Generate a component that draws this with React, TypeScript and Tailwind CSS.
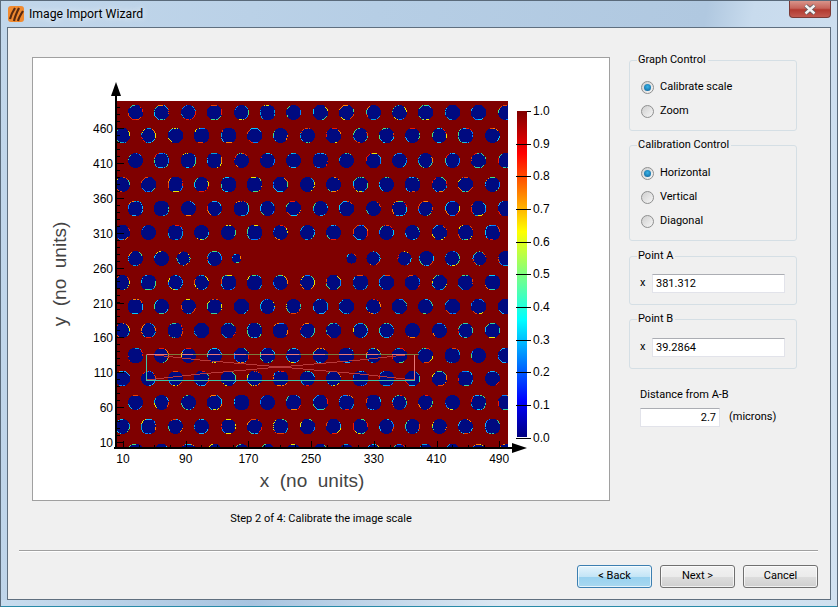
import type { ReactNode } from 'react'

const RIM_COLORS = ['#00c8ff', '#e8e800', '#40e080', '#f01800', '#ff8000', '#0080ff', '#10b0ff', '#e84000', '#00a0e0', '#30d0a0']

const ROW_YS = [112, 135, 160, 184, 208, 232, 258, 282, 306, 330, 355, 378, 402, 426, 451]
const PITCH = 26.4

// the row through the missing patch in the middle of the sample
const GAP_ROW: [number, number][] = [
  [135, 7.5], [161, 7.5], [183, 7], [214, 7.5], [236, 4.5], [351, 5], [373, 7],
  [404, 7], [426, 7.5], [452, 7.5], [479, 7], [505, 7.5],
]

function buildHoles() {
  let seed = 90210
  const rand = () => {
    seed = (seed * 16807) % 2147483647
    return seed / 2147483647
  }
  let fill = ''
  const rims: Record<string, string> = {}
  const addHole = (x: number, y: number, r: number) => {
    const cx = Math.round(x)
    const cy = Math.round(y)
    const phase = rand() * 6.28
    const colors = Array.from({ length: 8 }, () =>
      rand() < 0.45 ? '' : RIM_COLORS[Math.floor(rand() * RIM_COLORS.length)],
    )
    const rim = (px: number, py: number) => {
      if (rand() < 0.15) return
      const a = Math.atan2(py - cy, px - cx) + 3.15 + phase
      const c = colors[Math.floor(a / 0.8) % 8]
      if (c) rims[c] = (rims[c] || '') + `M${px} ${py}h1v1h-1z`
    }
    const top = Math.floor(r)
    for (let dy = -top; dy <= top; dy++) {
      const half = Math.floor(Math.sqrt(r * r - dy * dy))
      fill += `M${cx - half} ${cy + dy}h${half * 2 + 1}v1h-${half * 2 + 1}z`
      if (Math.abs(dy) === top) {
        for (let px = cx - half; px <= cx + half; px++) rim(px, cy + dy)
      } else {
        rim(cx - half, cy + dy)
        rim(cx + half, cy + dy)
      }
    }
  }
  ROW_YS.forEach((y, row) => {
    if (row === 6) {
      GAP_ROW.forEach(([x, r]) => addHole(x, y, r))
      return
    }
    const start = row % 2 === 0 ? 135 : 122
    for (let k = 0; k < 15; k++) addHole(start + k * PITCH, y, 7.3 + rand() * 0.7)
  })
  return { fill, rims }
}

const HOLES = buildHoles()

const Y_LABELS = [460, 410, 360, 310, 260, 210, 160, 110, 60, 10]
const X_LABELS = [10, 90, 170, 250, 330, 410, 490]
const BAR_LABELS = ['1.0', '0.9', '0.8', '0.7', '0.6', '0.5', '0.4', '0.3', '0.2', '0.1', '0.0']

function Plot() {
  const yMinor = Array.from({ length: 50 }, (_, i) => 128 - 28 + i * 6.98).filter((y) => y > 101 && y < 447)
  const xMinor = Array.from({ length: 26 }, (_, i) => 123 + i * 15.68)
  return (
    <svg width={576} height={442} viewBox="33 58 576 442" className="block" fontFamily='"Liberation Sans", sans-serif'>
      <defs>
        <clipPath id="plot-area">
          <rect x={116} y={101} width={392} height={346} />
        </clipPath>
        <linearGradient id="jet" x1="0" y1="1" x2="0" y2="0">
          <stop offset="0" stopColor="#000080" />
          <stop offset="0.11" stopColor="#0000ff" />
          <stop offset="0.36" stopColor="#00ffff" />
          <stop offset="0.5" stopColor="#80ff80" />
          <stop offset="0.63" stopColor="#ffff00" />
          <stop offset="0.87" stopColor="#ff0000" />
          <stop offset="1" stopColor="#7f0000" />
        </linearGradient>
      </defs>

      <rect x={116} y={101} width={392} height={347} fill="#7f0000" />
      <g clipPath="url(#plot-area)" shapeRendering="crispEdges">
        <path d={HOLES.fill} fill="#000a80" />
        {Object.entries(HOLES.rims).map(([color, d]) => (
          <path key={color} d={d} fill={color} />
        ))}
      </g>

      {/* calibration selection */}
      <g shapeRendering="crispEdges" fill="none">
        <path d="M146 354L200 360L280 367L360 360L414 354M146 380L200 374L280 367L360 374L414 380" stroke="#b83a3a" strokeWidth={1} />
        <path d="M146.5 354.5H414.5V380" stroke="#e87878" />
        <path d="M146.5 354.5V380.5H414.5" stroke="#3cc8a8" />
        {Array.from({ length: 10 }, (_, k) => (
          <path key={k} d={`M${167 + k * PITCH} 354.5h14`} stroke="#7c7c3c" />
        ))}
      </g>

      {/* axes */}
      <g stroke="#000" shapeRendering="crispEdges">
        <path d="M116 94V449M114 448H516" strokeWidth={2} />
        {yMinor.map((y) => (
          <path key={y} d={`M116 ${Math.round(y)}h4`} />
        ))}
        {Y_LABELS.map((v, i) => (
          <path key={v} d={`M116 ${Math.round(128 + i * 34.9)}h8`} />
        ))}
        {xMinor.filter((x) => x < 508).map((x) => (
          <path key={x} d={`M${Math.round(x)} 448v-3`} />
        ))}
        {X_LABELS.map((v, i) => (
          <path key={v} d={`M${Math.round(123 + i * 62.7)} 448v-7`} />
        ))}
      </g>
      <path d="M116 82L121 96H111Z" fill="#000" />
      <path d="M527 448L512 443V453Z" fill="#000" />

      {Y_LABELS.map((v, i) => (
        <text key={v} x={113} y={133 + i * 34.9} fontSize={12} textAnchor="end">
          {v}
        </text>
      ))}
      {X_LABELS.map((v, i) => (
        <text key={v} x={123 + i * 62.7} y={463} fontSize={12} textAnchor="middle">
          {v}
        </text>
      ))}
      <text x={312} y={487} fontSize={19} fill="#444" textAnchor="middle" style={{ whiteSpace: 'pre' }}>
        {'x  (no  units)'}
      </text>
      <text
        x={66}
        y={274}
        fontSize={19}
        fill="#444"
        textAnchor="middle"
        transform="rotate(-90 66 274)"
        style={{ whiteSpace: 'pre' }}
      >
        {'y  (no  units)'}
      </text>

      {/* colour bar */}
      <rect x={517} y={111} width={10} height={326} fill="url(#jet)" />
      {BAR_LABELS.map((label, i) => {
        const y = Math.round(111 + i * 32.65)
        return (
          <g key={label}>
            <path d={`M${i === 0 ? 527 : 516} ${y}.5H531`} stroke="#000" shapeRendering="crispEdges" />
            <text x={533} y={y + 4} fontSize={12}>
              {label}
            </text>
          </g>
        )
      })}
    </svg>
  )
}

function Radio({ label, checked }: { label: string; checked?: boolean }) {
  return (
    <div className="flex h-6 items-center gap-[6px]">
      <span className="flex h-[13px] w-[13px] items-center justify-center rounded-full border border-[#8e8f8f] bg-[linear-gradient(135deg,#cfcfcf,#f6f6f6)]">
        {checked && (
          <span className="h-[7px] w-[7px] rounded-full bg-[radial-gradient(circle_at_50%_40%,#39b4e8,#0a5a92)]" />
        )}
      </span>
      <span>{label}</span>
    </div>
  )
}

function Group({ title, className, children }: { title: string; className: string; children: ReactNode }) {
  return (
    <fieldset className={`rounded-[3px] border border-[#d5dfe5] ${className}`}>
      <legend className="ml-[7px] pl-[1px] pr-[2px] leading-4">{title}</legend>
      {children}
    </fieldset>
  )
}

function TextBox({ value, className }: { value: string; className: string }) {
  return (
    <input
      readOnly
      value={value}
      className={`h-[19px] border border-[#e2e3ea] border-t-[#abadb3] bg-white px-[3px] text-[11px] text-black outline-none ${className}`}
    />
  )
}

function PointRow({ value }: { value: string }) {
  return (
    <div className="flex items-center pl-[10px]">
      <span className="w-[12px]">x</span>
      <TextBox value={value} className="w-[133px]" />
    </div>
  )
}

function WizardButton({ label, primary }: { label: string; primary?: boolean }) {
  return (
    <button
      className={[
        'h-[23px] w-[75px] rounded-[3px] border text-center text-[11px] shadow-[inset_0_0_0_1px_#ffffffb0]',
        primary
          ? 'border-[#3c7fb1] bg-[linear-gradient(#e5f4fc,#c4e5f6_50%,#98d1ef_52%,#a8d8f0)]'
          : 'border-[#707070] bg-[linear-gradient(#f2f2f2,#ebebeb_50%,#dddddd_52%,#cfcfcf)]',
      ].join(' ')}
    >
      {label}
    </button>
  )
}

export default function App() {
  return (
    <div className='flex h-[607px] w-[838px] flex-col overflow-hidden border-x border-t border-[#5a6a7a] bg-[linear-gradient(100deg,#c2d7eb,#b6cee5_40%,#b0c8e0_75%,#c8dbed_80%,#d2e2f1)] font-["Roboto",sans-serif] text-[11px] text-black'>
      <div className="flex h-[26px] shrink-0 items-start justify-between pl-[7px] pr-[6px]">
        <div className="flex items-center gap-[5px] pt-[5px]">
          <svg width={16} height={16} viewBox="0 0 16 16">
            <rect width={16} height={16} rx={3} fill="#f08a30" />
            <path d="M2 13C3 9 5 5 7 2M6 15C7 10 9 6 11 2M10 15C11 11 13 8 15 5" stroke="#5a2a10" strokeWidth={2.2} fill="none" />
          </svg>
          <span className="text-[12.25px] leading-4 [text-shadow:0_0_6px_#ffffff]">Image Import Wizard</span>
        </div>
        <div className="flex h-[17px] w-[42px] items-center justify-center rounded-b-[4px] border border-t-0 border-[#7a3a36] bg-[linear-gradient(#d9948a,#c6645a_45%,#b23a30_55%,#c25a50)]">
          <svg width={14} height={11} viewBox="0 0 14 11">
            <path d="M2.5 1.5L11.5 9.5M11.5 1.5L2.5 9.5" stroke="#5a5a60" strokeWidth={4} />
            <path d="M2.5 1.5L11.5 9.5M11.5 1.5L2.5 9.5" stroke="#f4f4f4" strokeWidth={2.4} />
          </svg>
        </div>
      </div>

      <div className="mx-[6px] flex min-h-0 flex-1 flex-col border border-[#5f6f7f] bg-[#f0f0f0]">
        <div className="flex min-h-0 flex-1 gap-[19px] pl-[24px] pt-[24px]">
          <div className="mt-[5px] w-[578px]">
            <div className="h-[444px] border border-[#a0a0a0] bg-white">
              <Plot />
            </div>
            <p className="mt-[10px] text-center leading-4">Step 2 of 4: Calibrate the image scale</p>
          </div>

          <div className="flex w-[168px] flex-col">
            <Group title="Graph Control" className="h-[79px]">
              <div className="pl-[11px] pt-[7px]">
                <Radio label="Calibrate scale" checked />
                <Radio label="Zoom" />
              </div>
            </Group>
            <Group title="Calibration Control" className="mt-[6px] h-[104px]">
              <div className="pl-[11px] pt-[8px]">
                <Radio label="Horizontal" checked />
                <Radio label="Vertical" />
                <Radio label="Diagonal" />
              </div>
            </Group>
            <Group title="Point A" className="mt-[7px] h-[57px] pt-[10px]">
              <PointRow value="381.312" />
            </Group>
            <Group title="Point B" className="mt-[6px] h-[58px] pt-[11px]">
              <PointRow value="39.2864" />
            </Group>
            <p className="ml-[11px] mt-[18px] leading-4">Distance from A-B</p>
            <div className="ml-[11px] mt-[5px] flex items-center gap-[9px]">
              <TextBox value="2.7" className="w-[80px] text-right" />
              <span>(microns)</span>
            </div>
          </div>
        </div>

        <div className="ml-[11px] mr-[12px] h-[2px] shrink-0 border-t border-[#a0a0a0] bg-white" />
        <div className="flex shrink-0 justify-end gap-[8px] pb-[11px] pr-[12px] pt-[13px]">
          <WizardButton label="< Back" primary />
          <WizardButton label="Next >" />
          <WizardButton label="Cancel" />
        </div>
      </div>

      <div className="h-[7px] shrink-0 border-b border-[#2a8aa8] bg-[linear-gradient(90deg,#c8dcee,#a8c4e0_30%,#dce8f3_60%,#cfe0ef)]" />
    </div>
  )
}
